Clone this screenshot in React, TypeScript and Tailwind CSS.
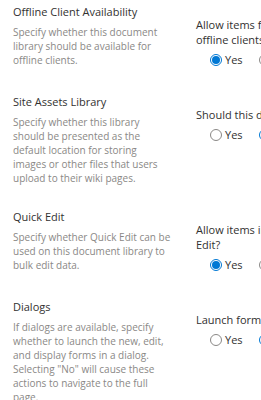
import { useState } from 'react';

interface Setting {
  title: string;
  description: string;
  question: string[];
  value: 'yes' | 'no';
}

const settings: Setting[] = [
  {
    title: 'Offline Client Availability',
    description: 'Specify whether this document library should be available for offline clients.',
    question: ['Allow items from this document library to be downloaded to', 'offline clients?'],
    value: 'yes',
  },
  {
    title: 'Site Assets Library',
    description:
      'Specify whether this library should be presented as the default location for storing images or other files that users upload to their wiki pages.',
    question: ['Should this document library be a site assets library?'],
    value: 'no',
  },
  {
    title: 'Quick Edit',
    description: 'Specify whether Quick Edit can be used on this document library to bulk edit data.',
    question: ['Allow items in this document library to be edited using Quick', 'Edit?'],
    value: 'yes',
  },
  {
    title: 'Dialogs',
    description:
      'If dialogs are available, specify whether to launch the new, edit, and display forms in a dialog. Selecting "No" will cause these actions to navigate to the full page.',
    question: ['Launch forms in a dialog?'],
    value: 'no',
  },
];

function Radio({ checked, label, onClick }: { checked: boolean; label: string; onClick: () => void }) {
  return (
    <button type="button" onClick={onClick} className="flex items-center gap-[3px] shrink-0">
      {checked ? (
        <span className="w-[12px] h-[12px] rounded-full border border-[#0078d4] flex items-center justify-center">
          <span className="w-[8px] h-[8px] rounded-full bg-[#0078d4]" />
        </span>
      ) : (
        <span className="w-[12px] h-[12px] rounded-full border border-[#8a8886]" />
      )}
      <span className="text-[11px] leading-[20px] text-[#323130]">{label}</span>
    </button>
  );
}

function SettingRow({ setting }: { setting: Setting }) {
  const [value, setValue] = useState(setting.value);

  return (
    <div className="flex items-start mb-[23px]">
      <div className="w-[159px] shrink-0">
        <div className="text-[11px] leading-[18px] text-[#323130]">{setting.title}</div>
        <div className="mt-[4px] text-[10px] leading-[14px] text-[#8a8886]">{setting.description}</div>
      </div>
      <div className="ml-[24px] w-[360px] shrink-0 pt-[14px]">
        <div className="text-[11px] leading-[15px] text-[#323130]">
          {setting.question.map((line) => (
            <div key={line} className="whitespace-nowrap">
              {line}
            </div>
          ))}
        </div>
        <div className="mt-[3px] ml-[14px] flex gap-[16px]">
          <Radio checked={value === 'yes'} label="Yes" onClick={() => setValue('yes')} />
          <Radio checked={value === 'no'} label="No" onClick={() => setValue('no')} />
        </div>
      </div>
    </div>
  );
}

export default function App() {
  return (
    <div
      className="w-[261px] h-[400px] overflow-hidden bg-white pl-[13px] pt-[3px]"
      style={{ fontFamily: '"Open Sans", sans-serif' }}
    >
      {settings.map((s) => (
        <SettingRow key={s.title} setting={s} />
      ))}
    </div>
  );
}
